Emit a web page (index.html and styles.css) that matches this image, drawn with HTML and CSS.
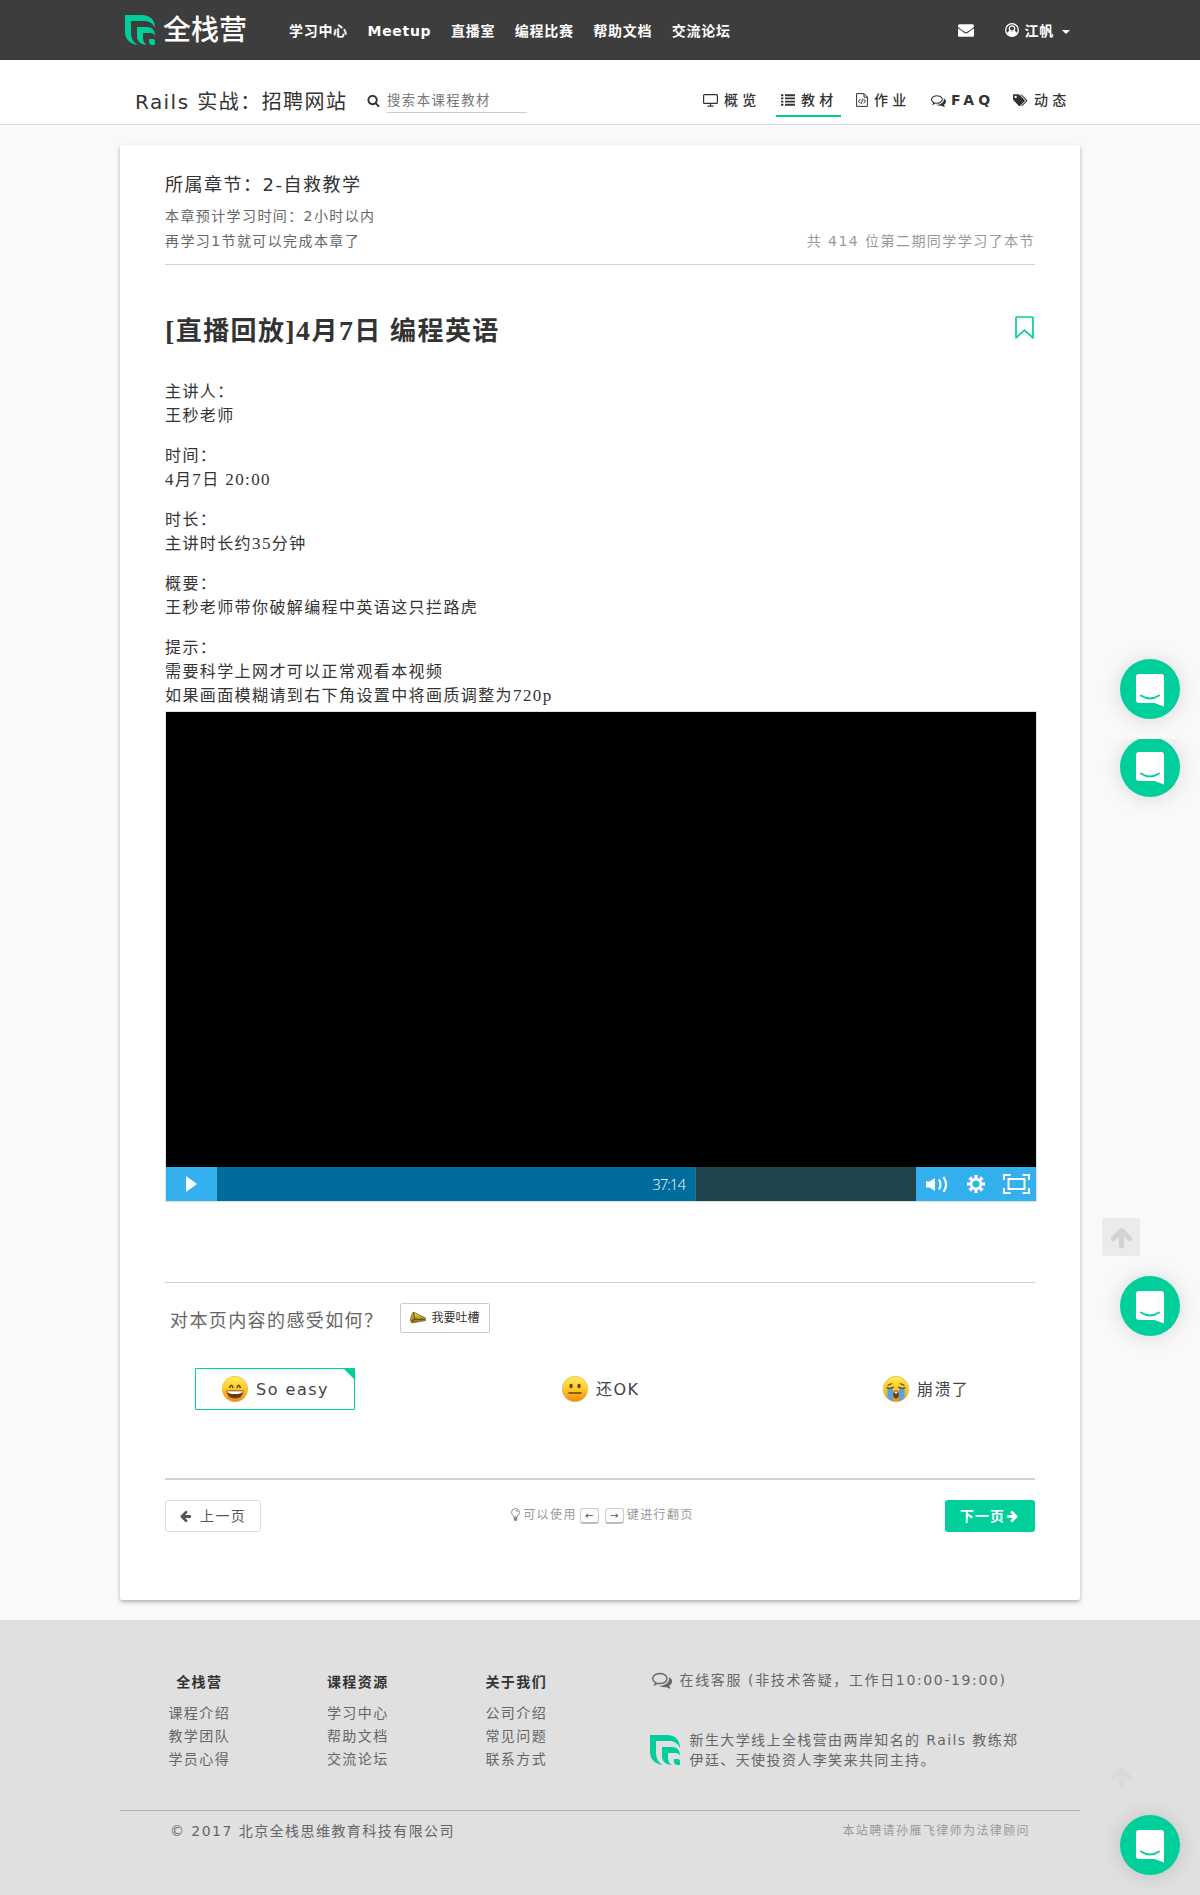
FILE: index.html
```html
<!DOCTYPE html>
<html lang="zh-CN">
<head>
<meta charset="utf-8">
<title>全栈营</title>
<link rel="stylesheet" href="styles.css">
</head>
<body>
<svg class="defs" width="0" height="0" aria-hidden="true">
  <defs>
    <linearGradient id="face" x1="0" y1="0" x2="0" y2="1"><stop offset="0" stop-color="#ffee5c"/><stop offset=".5" stop-color="#fdc927"/><stop offset="1" stop-color="#f08a12"/></linearGradient>
    <linearGradient id="horn" x1="0" y1="0" x2="0" y2="1"><stop offset="0" stop-color="#f3dc4e"/><stop offset="1" stop-color="#8a6a14"/></linearGradient>
    <symbol id="logo" viewBox="0 0 30 30"><path d="M0 0H17C25 0 30 5 30 13C28 8.500 24 6 19 6H6V17C6 23 8 27 12.500 30C5 29 0 24 0 17Z"/><path d="M12 12H22C27 12 30 15 30 20.500C28.500 18.500 27 18 24.500 18H18V22C18 25.500 19 28 21.500 30C16 29.500 12 26.500 12 21Z"/><path d="M24 24H27.500Q30 24 30 26.500V30H27Q24 29.500 24 26.500Z"/></symbol>
    <symbol id="envelope" viewBox="0 0 1792 1792"><path d="M1792 710v794q0 66-47 113t-113 47h-1472q-66 0-113-47t-47-113v-794q44 49 101 87 362 246 497 345 57 42 92.500 65.500t94.500 48 110 24.500h2q51 0 110-24.500t94.500-48 92.500-65.500q170-123 498-345 57-39 100-87zm0-294q0 79-49 151t-122 123q-376 261-468 325-10 7-42.500 31t-54 38.500-52 32.500-57.500 27-50 9h-2q-23 0-50-9t-57.500-27-52-32.500-54-38.500-42.500-31q-91-64-262-182.500t-205-142.500q-62-42-117-115.500t-55-136.500q0-78 41.500-130t118.500-52h1472q65 0 112.500 47t47.500 113z"/></symbol>
    <symbol id="search" viewBox="0 0 1792 1792"><path d="M1216 832q0-185-131.500-316.500t-316.500-131.500-316.500 131.500-131.500 316.500 131.500 316.500 316.500 131.500 316.500-131.500 131.500-316.500zm512 832q0 52-38 90t-90 38q-54 0-90-38l-343-342q-179 124-399 124-143 0-273.500-55.500t-225-150-150-225-55.500-273.500 55.500-273.500 150-225 225-150 273.500-55.500 273.500 55.500 225 150 150 225 55.500 273.500q0 220-124 399l343 343q37 37 37 90z"/></symbol>
    <symbol id="arrow-up" viewBox="0 0 1792 1792"><path d="M1675 971q0 51-37 90l-75 75q-38 38-91 38-54 0-90-38l-294-293v704q0 52-37.500 84.500t-90.500 32.500h-128q-53 0-90.500-32.500t-37.500-84.500v-704l-294 293q-36 38-90 38t-90-38l-75-75q-38-38-38-90 0-53 38-91l651-651q35-37 90-37 54 0 91 37l651 651q37 39 37 91z"/></symbol>
    <symbol id="comments" viewBox="0 0 1792 1792"><path d="M704 384q-153 0-286 52t-211.500 141-78.500 191q0 82 53 158t149 132l97 56-35 84q34-20 62-39l44-31 53 10q78 14 153 14 153 0 286-52t211.500-141 78.500-191-78.500-191-211.500-141-286-52zm0-128q191 0 353.500 68.500t256.500 186.500 94 257-94 257-256.500 186.500-353.500 68.500q-86 0-176-16-124 88-278 128-36 9-86 16h-3q-11 0-20.500-8t-11.500-21q-1-3-1-6.500t.5-6.500 2-6l2.500-5 3.500-5.500 4-5 4.500-5 4-4.500q5-6 23-25t26-29.500 22.500-29 25-38.500 20.500-44q-124-72-195-177t-71-224q0-139 94-257t256.500-186.500 353.500-68.500zm822 1169q10 24 20.500 44t25 38.500 22.500 29 26 29.500 23 25q1 1 4 4.500t4.500 5 4 5 3.500 5.500l2.500 5 2 6 .5 6.500-1 6.500q-3 14-13 22t-22 7q-50-7-86-16-154-40-278-128-90 16-176 16-271 0-472-132 58 4 88 4 161 0 309-45t264-129q125-92 192-212t67-254q0-77-23-152 129 71 204 178t75 230q0 120-71 224.500t-195 176.500z"/></symbol>
    <symbol id="chat" viewBox="0 0 28 34"><path d="M3 0H25Q28 0 28 3V32.500L18.500 29H3Q0 29 0 26V3Q0 0 3 0Z" fill="#fff"/><path d="M5 21.500Q14 27.500 23 21.500" fill="none" stroke="#00cf9b" stroke-width="1.900" stroke-linecap="round"/></symbol>
  </defs>
</svg>

<header class="topbar">
  <div class="wrap topbar-in">
    <a class="brand"><svg class="brand-mark"><use href="#logo"/></svg><span>全栈营</span></a>
    <nav class="mainnav"><a>学习中心</a><a>Meetup</a><a>直播室</a><a>编程比赛</a><a>帮助文档</a><a>交流论坛</a></nav>
    <div class="account">
      <svg class="mail" width="16" height="16"><use href="#envelope"/></svg>
      <svg class="user" width="14" height="14" viewBox="0 0 14 14"><circle cx="7" cy="7" r="6.300" fill="none" stroke="#fff" stroke-width="1.300"/><circle cx="7" cy="5.500" r="2.700" fill="none" stroke="#fff" stroke-width="1.200"/><path d="M2 10.200Q3 8 4.800 7.700Q7 9.600 9.200 7.700Q11 8 12 10.200Q10 13.300 7 13.300T2 10.200Z" fill="#fff"/></svg>
      <span>江帆</span><i class="caret"></i>
    </div>
  </div>
</header>

<div class="subbar">
  <div class="wrap subbar-in">
    <h2 class="course">Rails 实战：招聘网站</h2>
    <label class="search"><svg width="13" height="13"><use href="#search"/></svg><span>搜索本课程教材</span></label>
    <nav class="tabs">
      <a><svg width="15" height="13" viewBox="0 0 15 13"><path d="M1.500.600H13.500Q14.400.600 14.400 1.500V8.500Q14.400 9.400 13.500 9.400H1.500Q.600 9.400.600 8.500V1.500Q.600.600 1.500.600ZM7.500 9.500V12M4.500 12.200H10.500" fill="none" stroke="#333" stroke-width="1.200"/></svg><span>概览</span></a>
      <a class="on"><svg width="14" height="12" viewBox="0 0 14 12"><path d="M0 1.200H2.400M0 4.400H2.400M0 7.600H2.400M0 10.800H2.400M4 1.200H14M4 4.400H14M4 7.600H14M4 10.800H14" stroke="#333" stroke-width="1.900"/></svg><span>教材</span></a>
      <a><svg width="12" height="14" viewBox="0 0 12 14"><path d="M.600.600H8L11.400 4V13.400H.600ZM8 .600V4.200H11.400M4.300 6L2.600 8.200L4.300 10.400M7.700 6L9.400 8.200L7.700 10.400M6.600 5.600L5.400 10.800" fill="none" stroke="#333"/></svg><span>作业</span></a>
      <a class="faq"><svg width="15" height="15"><use href="#comments"/></svg><span>FAQ</span></a>
      <a><svg width="15" height="13" viewBox="0 0 15 13"><path fill-rule="evenodd" d="M0 1.200Q0 .300.900.300H5Q6 .300 6.800 1L11.600 5.900Q12.300 6.600 11.600 7.300L7.200 11.800Q6.500 12.500 5.800 11.800L.700 6.500Q0 5.700 0 4.900ZM2.600 1.700A1.200 1.200 0 1 0 2.610 1.700ZM7.200.300Q8.500.300 9.400 1.200L14 5.900Q14.700 6.600 14 7.300L9.600 11.800Q9 12.500 8.200 11.800L12.600 7.300Q13.300 6.600 12.600 5.900Z" fill="#333"/></svg><span>动态</span></a>
    </nav>
  </div>
</div>

<main class="wrap card">
  <section class="chapter">
    <div>
      <h3>所属章节：2-自救教学</h3>
      <p>本章预计学习时间：2小时以内</p>
      <p>再学习1节就可以完成本章了</p>
    </div>
    <p class="count">共 414 位第二期同学学习了本节</p>
  </section>

  <article>
    <div class="title-row">
      <h1><b>[</b>直播回放<b>]4</b>月<b>7</b>日<b> </b>编程英语</h1>
      <svg width="19" height="23" viewBox="0 0 19 23"><path d="M1.800 1H17.200Q18 1 18 1.800V21.800L9.500 14.200L1 21.800V1.800Q1 1 1.800 1Z" fill="none" stroke="#00cf9b" stroke-width="1.700" stroke-linejoin="round"/></svg>
    </div>
    <div class="prose">
      <p>主讲人：<br>王秒老师</p>
      <p>时间：<br><b>4</b>月<b>7</b>日<b> 20:00</b></p>
      <p>时长：<br>主讲时长约<b>35</b>分钟</p>
      <p>概要：<br>王秒老师带你破解编程中英语这只拦路虎</p>
      <p>提示：<br>需要科学上网才可以正常观看本视频<br>如果画面模糊请到右下角设置中将画质调整为<b>720p</b></p>
    </div>
    <div class="video">
      <div class="screen"></div>
      <div class="controls">
        <div class="play"><svg width="11" height="16" viewBox="0 0 11 16"><path d="M0 0L11 8L0 16Z" fill="#fff"/></svg></div>
        <div class="progress"><span>37:14</span></div>
        <div class="rest"></div>
        <div class="tools">
          <svg width="22" height="19" viewBox="0 0 22 19"><path d="M0 6.500H3.500L9 3V16L3.500 12.500H0Z" fill="#fff"/><path d="M13 4.500Q16 9.500 13 14.500M17.500 2Q22.500 9.500 17.500 17" fill="none" stroke="#fff" stroke-width="2.100"/></svg>
          <svg width="18" height="18" viewBox="-9 -9 18 18"><g fill="#fff"><path d="M-1.800-9H1.800L1.300-5H-1.300ZM-1.800 9H1.800L1.300 5H-1.300Z"/><path d="M-1.800-9H1.800L1.300-5H-1.300ZM-1.800 9H1.800L1.300 5H-1.300Z" transform="rotate(45)"/><path d="M-1.800-9H1.800L1.300-5H-1.300ZM-1.800 9H1.800L1.300 5H-1.300Z" transform="rotate(90)"/><path d="M-1.800-9H1.800L1.300-5H-1.300ZM-1.800 9H1.800L1.300 5H-1.300Z" transform="rotate(135)"/></g><circle r="4.900" fill="none" stroke="#fff" stroke-width="2.600"/></svg>
          <svg width="27" height="20" viewBox="0 0 27 20"><path d="M1 6V1H7.500M19.500 1H26V6M26 14V19H19.500M7.500 19H1V14M5.500 5H21.500V15H5.500Z" fill="none" stroke="#fff" stroke-width="2"/></svg>
        </div>
      </div>
    </div>
  </article>

  <section class="feedback">
    <div class="ask"><span>对本页内容的感受如何？</span>
      <a class="complain"><svg width="16" height="14" viewBox="0 0 16 14"><path d="M3.500 1L15.500 7V9.500L2 12L.500 10Q.500 4 3.500 1Z" fill="url(#horn)" stroke="#6e5a10" stroke-width=".7"/><path d="M3.500 1.500L4.500 8L14.500 8.300M4.500 8L2 11" fill="none" stroke="#574408" stroke-width="1.100"/></svg>我要吐槽</a>
    </div>
    <div class="moods">
      <a class="mood picked"><svg width="26" height="26" viewBox="0 0 26 26"><circle cx="13" cy="13" r="12.700" fill="url(#face)" stroke="#eda63a" stroke-width=".6"/><path d="M7.500 12Q9.300 6.500 11 12M15 12Q16.700 6.500 18.500 12" fill="none" stroke="#65400f" stroke-width="1.500"/><path d="M4.300 14.500H21.700Q20.500 22.600 13 22.600T4.300 14.500Z" fill="#6c3b10"/><path d="M5 15.200H21Q20.500 18 13 18T5 15.200Z" fill="#fff"/></svg><span>So easy</span></a>
      <a class="mood"><svg width="26" height="26" viewBox="0 0 26 26"><circle cx="13" cy="13" r="12.700" fill="url(#face)" stroke="#eda63a" stroke-width=".6"/><ellipse cx="9" cy="10" rx="1.700" ry="2.300" fill="#65400f"/><ellipse cx="17" cy="10" rx="1.700" ry="2.300" fill="#65400f"/><path d="M7 17H19" stroke="#65400f" stroke-width="1.500" stroke-linecap="round"/></svg><span>还OK</span></a>
      <a class="mood"><svg width="26" height="26" viewBox="0 0 26 26"><circle cx="13" cy="13" r="12.700" fill="url(#face)" stroke="#eda63a" stroke-width=".6"/><path d="M4.500 12H10V25Q7 24.500 4.500 21.500ZM16 12H21.500V21.500Q19 24.500 16 25Z" fill="#4fa6ec"/><path d="M3.500 11.500Q7.500 13.500 10.800 10.800M15.200 10.800Q18.500 13.500 22.500 11.500M4.500 9.500L9 7.500M21.500 9.500L17 7.500" fill="none" stroke="#65400f" stroke-width="1.300"/><ellipse cx="13" cy="18.500" rx="2.800" ry="4" fill="#6c3b10"/><ellipse cx="13" cy="16.500" rx="1.500" ry="1.200" fill="#f3e6d6"/></svg><span>崩溃了</span></a>
    </div>
  </section>

  <div class="pager">
    <a class="prev"><svg width="13" height="13"><use href="#arrow-up"/></svg><span>上一页</span></a>
    <div class="hint"><svg width="9" height="13" viewBox="0 0 9 13"><path d="M3 9.300Q3 8 1.500 6.800Q.500 5.800.500 4.300Q.600.600 4.500.500Q8.400.600 8.500 4.300Q8.500 5.800 7.500 6.800Q6 8 6 9.300ZM4.500 2.300Q6.500 2.400 6.600 4" fill="none" stroke="#888"/><path d="M2.800 9H6.200V12L5 13H4L2.800 12Z" fill="#888"/></svg><span>可以使用</span><kbd>←</kbd><kbd>→</kbd><span>键进行翻页</span></div>
    <a class="next"><span>下一页</span><svg width="13" height="13"><use href="#arrow-up"/></svg></a>
  </div>
</main>

<footer class="footer">
  <div class="wrap">
    <div class="foot-main">
      <div class="col"><h4>全栈营</h4><a>课程介绍</a><a>教学团队</a><a>学员心得</a></div>
      <div class="col"><h4>课程资源</h4><a>学习中心</a><a>帮助文档</a><a>交流论坛</a></div>
      <div class="col"><h4>关于我们</h4><a>公司介绍</a><a>常见问题</a><a>联系方式</a></div>
      <div class="about">
        <p class="service"><svg width="20" height="20"><use href="#comments"/></svg><span>在线客服 (非技术答疑，工作日10:00-19:00)</span></p>
        <div class="intro"><svg class="brand-mark"><use href="#logo"/></svg><p>新生大学线上全栈营由两岸知名的 Rails 教练郑<br>伊廷、天使投资人李笑来共同主持。</p></div>
      </div>
    </div>
    <div class="legal"><span>© 2017 北京全栈思维教育科技有限公司</span><small>本站聘请孙雁飞律师为法律顾问</small></div>
  </div>
</footer>

<a class="bubble b1"><svg width="28" height="34"><use href="#chat"/></svg></a>
<div class="cut"><a class="bubble b2"><svg width="28" height="34"><use href="#chat"/></svg></a></div>
<a class="to-top t1"><svg width="25" height="25"><use href="#arrow-up"/></svg></a>
<a class="bubble b3"><svg width="28" height="34"><use href="#chat"/></svg></a>
<a class="to-top t2"><svg width="25" height="25"><use href="#arrow-up"/></svg></a>
<a class="bubble b4"><svg width="28" height="34"><use href="#chat"/></svg></a>
</body>
</html>
```
FILE: styles.css
```css
* { box-sizing: border-box; }
body {
  margin: 0;
  position: relative;
  height: 1895px;
  overflow: hidden;
  background: #f9f9f9;
  color: #333;
  font: 14px/20px "DejaVu Sans", "Noto Sans CJK SC", sans-serif;
  letter-spacing: 1.4px;
}
h1, h2, h3, h4, p { margin: 0; font-weight: 400; }
svg { display: block; flex: none; fill: currentColor; }
span { white-space: nowrap; }
.defs { position: absolute; }
.wrap { width: 960px; margin: 0 auto; }
.brand-mark { width: 30px; height: 30px; color: #00cf9b; }

/* top bar */
.topbar { height: 60px; background: #3d3d3d; color: #fff; }
.topbar-in { display: flex; height: 60px; align-items: center; }
.brand { display: flex; width: 169px; padding: 0 0 1px 5px; align-items: center; gap: 8px; font-size: 28px; line-height: 40px; letter-spacing: 0; font-weight: 500; }
.brand span { padding-top: 3px; }
.mainnav { display: flex; gap: 19.700px; padding-top: 2px; font-weight: 700; letter-spacing: .7px; }
.account { display: flex; margin-left: auto; padding-right: 10px; align-items: center; font-weight: 700; letter-spacing: .7px; }
.account span { padding-top: 2px; }
.mail { margin-right: 31px; }
.user { margin-right: 6px; }
.caret { margin: 3px 0 0 8px; border: 4px solid transparent; border-top-color: #fff; border-bottom: 0; }

/* course bar */
.subbar { height: 65px; background: #fff; border-bottom: 1px solid #ddd; }
.subbar-in { display: flex; height: 64px; padding: 0 7px 0 15px; }
.course { width: 232px; padding-top: 27px; font-size: 20px; line-height: 30px; white-space: nowrap; letter-spacing: 1.450px; }
.search { display: flex; height: 25px; margin-top: 28px; gap: 7px; line-height: 26px; }
.search svg { margin-top: 6px; }
.search span { width: 140px; border-bottom: 1px solid #ccc; color: #777; font-size: 13.330px; letter-spacing: 1.500px; }
.tabs { display: flex; margin-left: auto; height: 30px; margin-top: 27px; gap: 10px; font-weight: 500; letter-spacing: 4.200px; }
.tabs a { display: flex; width: 65px; align-items: center; gap: 6px; padding: 0 0 4px 5px; }
.tabs a:first-child { margin-right: 3px; }
.tabs .faq { width: 72px; gap: 5px; font-weight: 700; }
.tabs .on { border-bottom: 2px solid #00cf9b; padding-bottom: 2px; }

/* page card */
.card { height: 1455px; margin-top: 20px; padding: 0 45px; background: #fff; border-radius: 2px; box-shadow: 0 2px 4px rgba(0,0,0,.3); }
.chapter { display: flex; justify-content: space-between; align-items: flex-end; height: 120px; padding-bottom: 10px; border-bottom: 1px solid #c8d5d9; color: #666; line-height: 25px; }
.chapter h3 { color: #333; font-size: 18px; line-height: 28px; margin-bottom: 5px; letter-spacing: 1.500px; }
.chapter .count { color: #999; letter-spacing: 1.450px; }
.title-row { display: flex; justify-content: space-between; align-items: center; height: 114px; padding: 13px 1px 0 0; }
.title-row svg { margin: -2px 0 0; }
h1 { font-size: 26px; font-weight: 700; line-height: 40px; font-family: "Noto Sans CJK SC", sans-serif; }
h1 b { font: 700 28px/1 "Liberation Serif", serif; white-space: pre; }
.prose { height: 332px; margin-top: -1px; margin-bottom: 1px; font: 16px/24px "Noto Sans CJK SC", sans-serif; }
.prose b { font: 400 17px/1 "Liberation Serif", serif; white-space: pre; }
.prose p { margin-bottom: 16px; }
.video { width: 872px; height: 491px; border: 1px solid #dde3e4; }
.screen { height: 455px; background: #000; }
.controls { display: flex; height: 34px; }
.play { display: flex; width: 51px; align-items: center; justify-content: center; background: #34b0ef; }
.progress { width: 479px; padding-right: 10px; background: #006c9b; border-right: 1px solid #2d7a86; color: #fff; text-align: right; font: 15px/34px "Open Sans", sans-serif; font-weight: 300; letter-spacing: -1px; }
.rest { flex: 1; background: #1f454c; }
.tools { display: flex; width: 120px; padding: 0 6px 0 10px; align-items: center; justify-content: space-between; background: #34b0ef; }

/* feedback */
.feedback { height: 198px; margin-top: 80px; border-top: 1px solid #c8d5d9; border-bottom: 2px solid #c8d5d9; }
.ask { display: flex; height: 70px; padding: 20px 0 0 5px; color: #666; font-size: 18px; line-height: 36px; }
.ask span { width: 230px; }
.complain { display: flex; width: 90px; height: 30px; align-items: center; justify-content: center; gap: 5px; border: 1px solid #ccc; border-radius: 2px; color: #333; font-size: 12px; letter-spacing: 0; white-space: nowrap; }
.moods { display: flex; padding: 15px 30px 0; justify-content: space-between; font-size: 16px; color: #444; }
.mood { display: flex; width: 160px; height: 42px; align-items: center; gap: 8px; padding: 0 0 1px 42px; }
.mood span { padding-top: 2px; }
.mood:nth-child(3) { padding-left: 38px; }
.picked { position: relative; padding: 0 0 1px 26px; border: 1px solid #00cf9b; border-radius: 1px; }
.picked span { letter-spacing: 1.500px; }
.picked::after { content: ""; position: absolute; right: -1px; top: -1px; border: 6.500px solid #00cf9b; border-left-color: transparent; border-bottom-color: transparent; }

/* pager */
.pager { display: flex; margin-top: 20px; height: 32px; justify-content: space-between; align-items: center; }
.prev, .next { display: flex; height: 32px; align-items: center; border-radius: 3px; }
.prev { width: 96px; padding-left: 13px; gap: 8px; border: 1px solid #ddd; color: #555; }
.prev svg { transform: rotate(-90deg); }
.next { width: 90px; padding-left: 15px; background: #00cf9b; color: #fff; font-weight: 700; letter-spacing: 1px; }
.next svg { margin-left: 1px; transform: rotate(90deg); }
.hint { display: flex; align-items: center; margin-right: 1px; color: #999; font-size: 12px; }
.hint svg { margin-right: 3px; margin-top: -3px; }
.hint span { margin-top: -2px; }
kbd { width: 19px; height: 16px; margin: 0 3px; border: 1px solid #ccc; border-bottom: 2px solid #bbb; border-radius: 3px; background: #fcfcfc; color: #555; font: 10px/13px "DejaVu Sans", sans-serif; letter-spacing: 0; text-align: center; }

/* footer */
.footer { margin-top: 20px; height: 275px; background: #e0e0e0; color: #666; }
.foot-main { display: flex; height: 191px; padding: 50px 0 0; border-bottom: 1px solid #b3b3b3; }
.col { display: flex; width: 158.500px; padding-top: 1px; flex-direction: column; align-items: center; line-height: 23px; }
.col h4 { margin-bottom: 8px; color: #333; font-weight: 700; }
.about { margin: 0 0 0 54px; }
.service { display: flex; gap: 8px; padding-left: 2px; }
.service span { letter-spacing: 1.630px; }
.intro { display: flex; gap: 10px; margin-top: 40px; white-space: nowrap; }
.intro svg { margin-top: 5px; }
.legal { display: flex; justify-content: space-between; padding: 10px 50px 0; }
.legal span { letter-spacing: 1.450px; }
.legal small { font-size: 12px; color: #999; }

/* floating buttons */
.bubble { position: absolute; left: 1120px; display: flex; width: 60px; height: 60px; padding-top: 3px; align-items: center; justify-content: center; border-radius: 50%; background: #00cf9b; box-shadow: 0 1px 20px rgba(0,0,0,.14); }
.b1 { top: 659px; }
.b3 { top: 1276px; }
.b4 { top: 1815px; }
.cut { position: absolute; left: 1090px; top: 739px; width: 110px; height: 100px; overflow: hidden; }
.b2 { left: 30px; top: -2px; }
.to-top { position: absolute; left: 1102px; display: flex; width: 38px; height: 38px; align-items: center; justify-content: center; border-radius: 3px; color: #d3d3d3; }
.t1 { top: 1218px; background: #ebebeb; }
.t2 { top: 1757px; color: #dadada; }
```
